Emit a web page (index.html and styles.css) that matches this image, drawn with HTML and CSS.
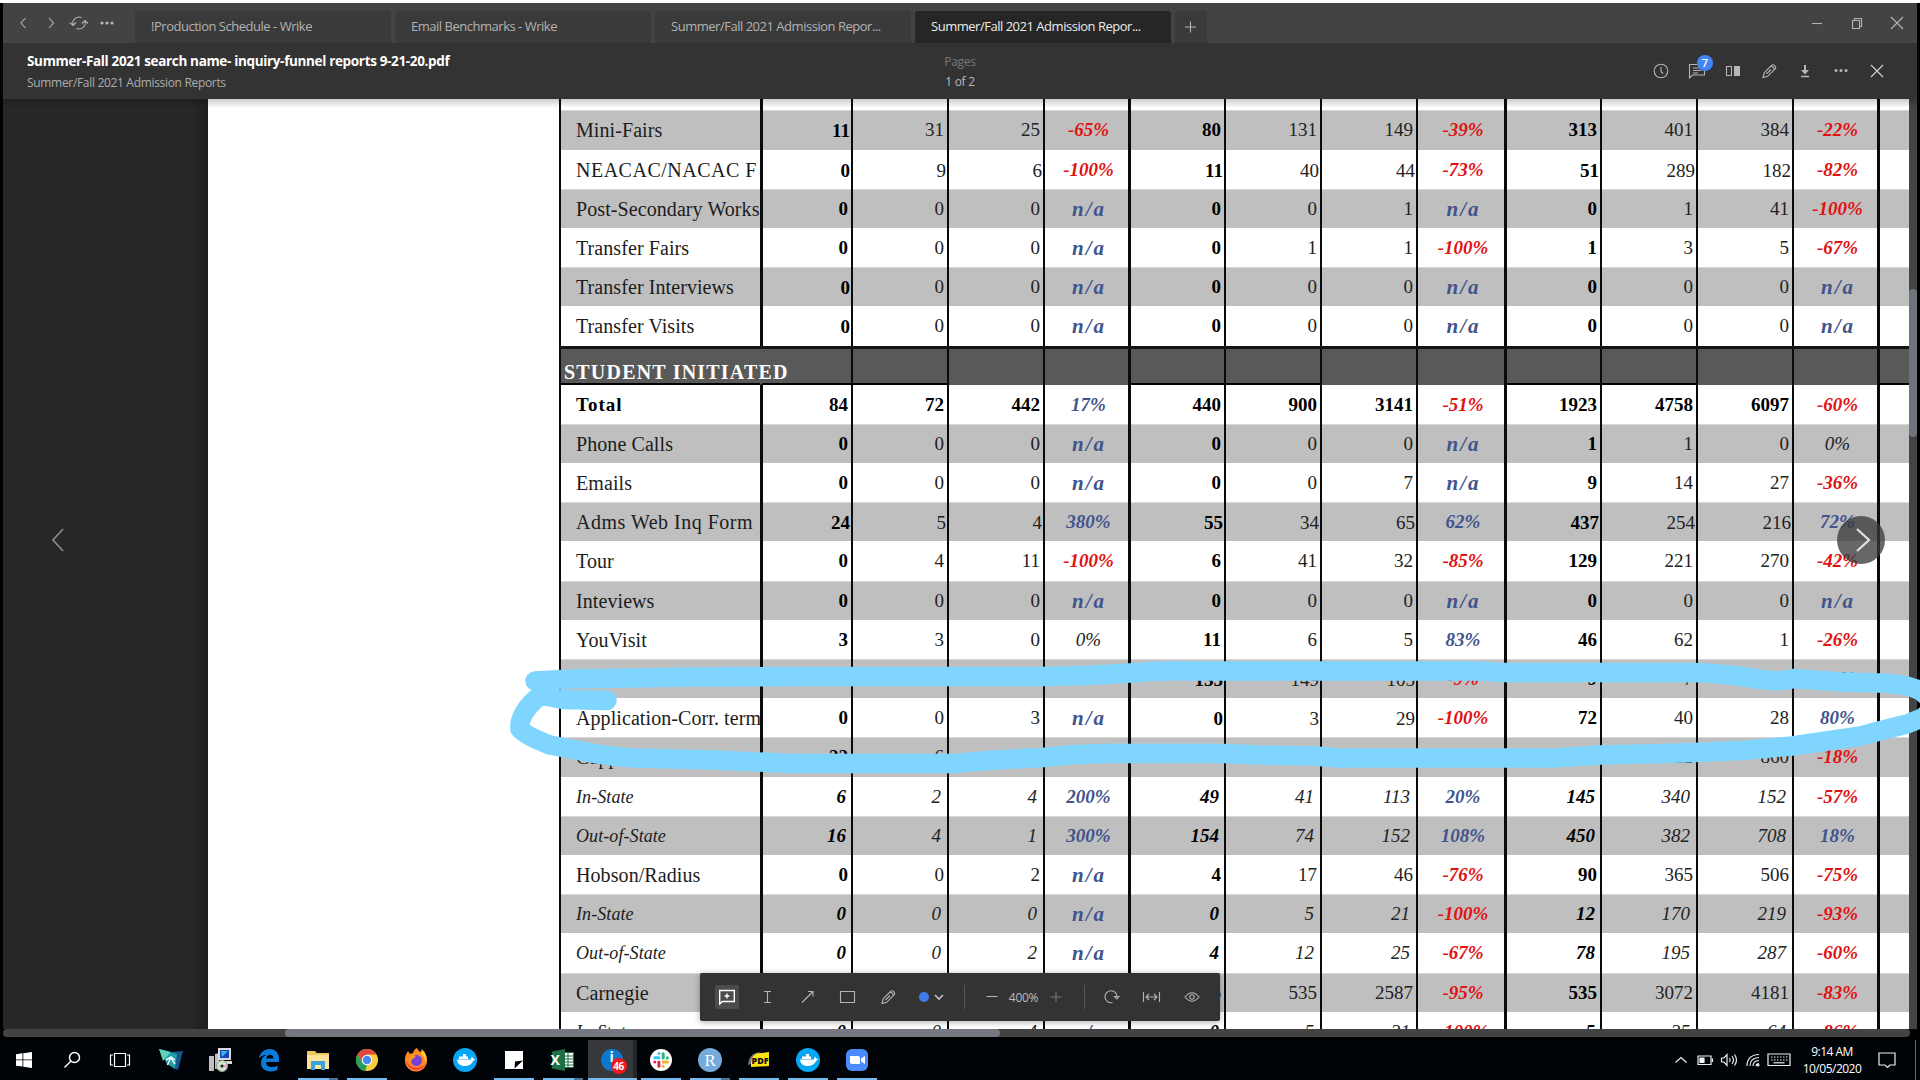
FILE: index.html
```html
<!DOCTYPE html>
<html lang="en">
<head>
<meta charset="utf-8">
<title>Summer/Fall 2021 Admission Reports</title>
<link rel="stylesheet" href="styles.css">
</head>
<body>
<div class="window">
  <div class="titlebar">
    <div class="nav">
      <svg class="ic" viewBox="0 0 24 24"><path d="M14.500 7 10 12l4.500 5"/></svg>
      <svg class="ic" viewBox="0 0 24 24"><path d="M10 7 14.500 12 10 17"/></svg>
      <svg class="ic" viewBox="0 0 24 24"><path d="M6 14A6.300 6.300 0 0 1 14.500 6.500M18 10A6.300 6.300 0 0 1 9.500 17.500M3 11.500l3 3L9 11.500M15 12.500l3-3 3 3"/></svg>
      <svg class="ic dots" viewBox="0 0 24 24"><circle cx="7" cy="12" r="1.600"/><circle cx="12" cy="12" r="1.600"/><circle cx="17" cy="12" r="1.600"/></svg>
    </div>
    <div class="tabs">
      <div class="tab">!Production Schedule - Wrike</div>
      <div class="tab">Email Benchmarks - Wrike</div>
      <div class="tab">Summer/Fall 2021 Admission Repor...</div>
      <div class="tab active">Summer/Fall 2021 Admission Repor...</div>
      <div class="tab new"><svg class="ic" viewBox="0 0 24 24"><path d="M11.500 6.500v11M6 12h11"/></svg></div>
    </div>
    <div class="controls">
      <svg class="ic" viewBox="0 0 24 24"><path d="M7 12.500h10"/></svg>
      <svg class="ic" viewBox="0 0 24 24"><path d="M7.500 9.500h7v8h-7zM9.500 9.500v-2h7v8h-2"/></svg>
      <svg class="ic" viewBox="0 0 24 24"><path d="m6 6 12 12M18 6 6 18"/></svg>
    </div>
  </div>

  <div class="header">
    <div class="doc">
      <div class="name">Summer-Fall 2021 search name- inquiry-funnel reports 9-21-20.pdf</div>
      <div class="folder">Summer/Fall 2021 Admission Reports</div>
    </div>
    <div class="pages"><div class="cap">Pages</div><div class="num">1 of 2</div></div>
    <div class="actions">
      <div><svg class="ic" viewBox="0 0 24 24"><circle cx="12" cy="12" r="6.800"/><path d="M12 8v4.500l2 2"/></svg></div>
      <div><svg class="ic" viewBox="0 0 24 24"><path d="M4.500 19V5.500h15V16H7.500zM8 9h6M8 11.500h8M8 14h5"/></svg><span class="badge">7</span></div>
      <div><svg class="ic" viewBox="0 0 24 24"><path d="M5.500 7.500h5v9h-5z"/><path class="solid" d="M13 7h6v10h-6z"/></svg></div>
      <div><svg class="ic" viewBox="0 0 24 24"><path d="m6 18.500 1.200-4.700 7.600-7.600q1.200-1 2.400 0l1.100 1.100q1 1.200 0 2.400l-7.600 7.600zM14 7.200q3 .3 3.300 3.300M14 10.500l-4.500 4.500"/></svg></div>
      <div><svg class="ic" viewBox="0 0 24 24"><path class="solid" d="M11 6h2v5h3l-4 4.500L8 11h3zM8 16.700h8v1.500H8z"/></svg></div>
      <div><svg class="ic dots" viewBox="0 0 24 24"><circle cx="7" cy="11.500" r="1.500"/><circle cx="12" cy="11.500" r="1.500"/><circle cx="17" cy="11.500" r="1.500"/></svg></div>
      <div><svg class="ic bright" viewBox="0 0 24 24"><path d="m6 6 12 12M18 6 6 18"/></svg></div>
    </div>
  </div>

  <div class="viewer">
    <div class="gutter"><svg viewBox="0 0 24 32"><path d="M17 5 7 16l10 11"/></svg></div>
    <div class="page"><div class="sheet" id="sheet"></div></div>
    <div class="vscroll"><div class="vthumb"></div></div>
    <div class="next"><svg viewBox="0 0 48 48"><path d="m20 13 12 11-12 11"/></svg></div>
    <div class="tools">
      <div class="t w1"><span class="sel"><svg class="ic white" viewBox="0 0 24 24"><path d="M4.700 19V5.500h14.600v11H7.500zM12 8.500v5M9.500 11h5"/></svg></span></div>
      <div class="t w1"><svg class="ic" viewBox="0 0 24 24"><path d="M12.500 6.500v11M9 6.500h7M9 17.500h7"/></svg></div>
      <div class="t w1"><svg class="ic" viewBox="0 0 24 24"><path d="M7 17.500 17.500 7M13 6.500h5v5"/></svg></div>
      <div class="t w1"><svg class="ic" viewBox="0 0 24 24"><path d="M5.500 6.500h14v11h-14z"/></svg></div>
      <div class="t w1"><svg class="ic" viewBox="0 0 24 24"><path d="m7 18.500 1.200-4.700 7.600-7.600q1.200-1 2.400 0l1.100 1.100q1 1.200 0 2.400l-7.600 7.600zM15 7.200q3 .3 3.300 3.300M15 10.500l-4.500 4.500"/></svg></div>
      <div class="t w2"><i class="ink"></i><svg class="chev" viewBox="0 0 12 12"><path d="m2 4 4 4 4-4"/></svg></div>
      <div class="rule"></div>
      <div class="t w3"><svg class="ic" viewBox="0 0 24 24"><path d="M6.500 11.500h11"/></svg><span class="zoom">400%</span><svg class="ic dim" viewBox="0 0 24 24"><path d="M12 6.500v11M6.500 12h11"/></svg></div>
      <div class="rule"></div>
      <div class="t w4"><svg class="ic" viewBox="0 0 24 24"><path d="M12.500 17.500A6 6 0 1 1 17 12M14.500 11.500l2.500 2.500 2-2.500z"/></svg></div>
      <div class="t w1"><svg class="ic" viewBox="0 0 24 24"><path d="M4.500 7v10M20.500 7v10M7 12h11M10 9l-3 3 3 3M15 9l3 3-3 3"/></svg></div>
      <div class="t w1"><svg class="ic" viewBox="0 0 24 24"><path d="M6 12q7-8.500 14 0-7 8.500-14 0z"/><circle cx="13" cy="12" r="2.200"/></svg></div>
    </div>
  </div>
  <div class="hscroll"><div class="hthumb"></div></div>
</div>

<div class="taskbar">
  <div class="task sys"><svg viewBox="0 0 32 32"><path fill="#fff" d="M8 10.300l6.500-1v6.200H8zM15.300 9.200 24 8v7.500h-8.700zM8 16.300h6.500v6.300L8 21.700zM15.300 16.300H24V24l-8.700-1.300z"/></svg></div>
  <div class="task sys"><svg viewBox="0 0 32 32" fill="none" stroke="#fff" stroke-width="1.500"><circle cx="18.500" cy="13.500" r="5"/><path d="m15 17-6.500 6.500"/></svg></div>
  <div class="task sys"><svg viewBox="0 0 32 32" fill="none" stroke="#fff" stroke-width="1.200"><path d="M10.500 9.500h11v13h-11zM9 11H6.500v10H9M23 11h2.500v10H23"/></svg></div>
  <div class="task first"><svg viewBox="0 0 32 32"><path fill="#17578b" d="m15 8 13-1-5 19-5-2z"/><path fill="#1f9fa5" d="m4 5 18 5-2 15-8-5z"/><path fill="#5fd0bb" d="m4 5 12 3-8 9z"/><path d="m11 16 5-3 4 3M15.500 14l-3 7M16 14l4 6" stroke="#e8fbff" stroke-width="1.500" fill="none"/></svg></div>
  <div class="task"><svg viewBox="0 0 32 32"><path fill="#bfbfbf" d="M5 12h5v15H5zM11 10l4-1v16h-4z"/><path fill="#d9d9d9" d="M14 4h13v12H14zM13 17h15v3H13z"/><path fill="#1746b8" d="M16 6h9v8h-9z"/><path fill="#3bb3e8" d="m17 7 7 0-6 6z"/><circle cx="18" cy="22" r="5.500" fill="#cfe5c8" stroke="#999"/><path fill="#e7a2d0" d="m18 22 5-2v4z"/><circle cx="18" cy="22" r="1.600" fill="#222"/></svg></div>
  <div class="task"><svg viewBox="0 0 32 32"><path fill="#0a7bd8" d="M6 14.500C7 8.500 11.500 5 16.500 5 23 5 26 9.800 26 15v3H13c.3 6 7.500 6 11.500 3.500V26C18 29 8 27.500 8 19c0-4.500 3-7 5.500-8.200-3 .2-5.700 1.500-7.500 3.700zM13.200 14.500h7.300c0-5-6.500-5-7.300 0z"/></svg></div>
  <div class="task run split"><svg viewBox="0 0 32 32"><path fill="#f0c95c" d="M5 7h8l1.500 2H27v15H5z"/><path fill="#fbe39a" d="M5 11h22v14H5z"/><path fill="#3aa2dc" d="M9 17h14v9h-4v-5h-6v5H9z"/></svg></div>
  <div class="task run"><svg viewBox="0 0 32 32"><circle cx="16" cy="16" r="11" fill="#f5cd3d"/><path fill="#dc4a3d" d="M6.500 10.500a11 11 0 0 1 19 0H16l-4.700 8z"/><path fill="#26a05a" d="M6.500 10.500 11.300 18.700 16 21l-1.700 6A11 11 0 0 1 6.500 10.500z"/><circle cx="16" cy="16" r="5.200" fill="#fff"/><circle cx="16" cy="16" r="4.200" fill="#4a87ee"/></svg></div>
  <div class="task"><svg viewBox="0 0 32 32"><path fill="#ff8b1f" d="M5 15c0-4 2-6 3-8l2 3q2-1 3-1 1-4 4-5 1 3 4 4l1-3q5 5 5 11a11 11 0 0 1-22 1z"/><path fill="#ffce3d" d="m22 6q6 6 4 12-2-6-5-8z"/><path fill="#f8433d" d="M5.500 15c2 8 12 12 20 5-4 9-18 9-20-5z"/><circle cx="16.500" cy="16.500" r="5.500" fill="#7542d8"/><path fill="#ff9a2c" d="M10 12q4-2 6 1-4 1-5 5z"/></svg></div>
  <div class="task"><svg viewBox="0 0 32 32"><circle cx="16" cy="16" r="12" fill="#06a6f4"/><path fill="#fff" d="M8 15.500h14q0-2 1-3l1.300 2 2 .5-2 1.800Q22 22 15 22q-6.500 0-7-6.500zM10 12.500h9V15h-9zM14 10h3v3h-3z"/></svg></div>
  <div class="task run"><svg viewBox="0 0 32 32"><path fill="#fff" d="M7 7h18v18H7z"/><path fill="#000" d="M16.500 24.500 17 17.500 25 16.500z"/></svg></div>
  <div class="task run split"><svg viewBox="0 0 32 32"><path fill="#fff" stroke="#1d7044" d="M16 8.500h10.500v15H16z"/><path stroke="#1d7044" d="M16 12h10M16 15h10M16 18h10M16 21h10M21 9v14"/><path fill="#1d7044" d="m5 7.500 13-2.500v22L5 24.500z"/></svg><b class="xl">X</b></div>
  <div class="task run on"><svg viewBox="0 0 32 32"><circle cx="16" cy="16" r="11" fill="#0a78cf"/></svg><b class="info">i</b><b class="count">46</b></div>
  <div class="task run"><svg viewBox="0 0 32 32" fill="none" stroke-width="3" stroke-linecap="round"><circle cx="16" cy="16" r="11" fill="#fff"/><path stroke="#36c5f0" d="M14 9.500v.1M9.800 13.800h4.200"/><path stroke="#2eb67d" d="M18.200 9.800v4.200M22.300 13.800v.1"/><path stroke="#e01e5a" d="M13.900 18v4.200M9.800 18v.1"/><path stroke="#ecb22e" d="M18.200 18h4.200M18.200 22.200v.1"/></svg></div>
  <div class="task run split"><svg viewBox="0 0 32 32"><circle cx="16" cy="16" r="12" fill="#75aadb"/></svg><b class="rr">R</b></div>
  <div class="task run"><svg viewBox="0 0 32 32"><path fill="#777" d="M5 21Q6 9 17 8L8 20z"/><path fill="#ffe610" d="M8 23Q7 9 18 9l8-1v14z"/></svg><b class="pdf">PDF</b></div>
  <div class="task run"><svg viewBox="0 0 32 32"><circle cx="16" cy="16" r="12" fill="#06a6f4"/><path fill="#fff" d="M8 15.500h14q0-2 1-3l1.300 2 2 .5-2 1.800Q22 22 15 22q-6.500 0-7-6.500zM10 12.500h9V15h-9zM14 10h3v3h-3z"/></svg></div>
  <div class="task run"><svg viewBox="0 0 32 32"><rect x="5" y="5" width="22" height="22" rx="6" fill="#4a8cff"/><path fill="#fff" d="M9 12h8q2 0 2 2v6h-8q-2 0-2-2zM20 14.500l4-2.500v8l-4-2.500z"/></svg></div>
  <div class="tray">
    <svg viewBox="0 0 24 24"><path d="m6.500 14.500 5.500-5 5.500 5"/></svg>
    <svg viewBox="0 0 24 24"><path d="M5 8h13v8.500H5zM19.500 10.500v3.500"/><path fill="#fff" d="M7 10h4v4.500H7z"/></svg>
    <svg viewBox="0 0 24 24"><path d="M4.500 10h2.500l3-3.500v11L7 14H4.500zM12.500 10q1.500 2 0 4M15 8q3 4 0 8M17.500 6.500q4 5.500 0 11"/></svg>
    <svg viewBox="0 0 24 24"><path d="M6 18Q6 7 18 6.500M9 18q0-8 9-8.500M12 18q0-5 6-5.500M15 18q0-2 3-2.500"/><circle cx="17" cy="17" r="1"/></svg>
    <svg class="kb" viewBox="0 0 28 24"><path d="M3 6h22v11.500H3z"/><path stroke-dasharray="1.500 1.500" d="M6 9h17M6 12h17"/><path d="M8.500 14.800h11"/></svg>
    <div class="clock"><div>9:14 AM</div><div class="date">10/05/2020</div></div>
    <svg viewBox="0 0 24 24"><path d="M4 5h16v12h-5l-2.500 2.500L10 17H4z"/></svg>
    <i class="peek"></i>
  </div>
</div>

<svg class="marker" viewBox="0 0 1920 1080"><path d="M535 681 572 679Q640 678 690 677L862 676.500H1043Q1090 676 1130 673T1190 671H1475L1505 672.500H1690Q1720 673 1751 678T1792 678.500L1843 682 1879 683Q1910 684 1922 692 1940 706 1922 718L1907 724 1879 731 1861 736 1792 746 1742 750.500 1682 753 1600 755 1553 758H1338L1315 756 1260 755 1223 753.500H1111Q1070 754 1043 757.500L994 760 953 763.500H794L713 760 636 758Q610 757 581 751L550 745Q526 736 520 729 519 722 524 713 530 703 541 695L563 699.500 607 700.500"/></svg>
<script src="report.js"></script>
</body>
</html>
```
FILE: styles.css
```css
* { box-sizing: border-box; }
body { margin: 0; width: 1920px; height: 1080px; overflow: hidden; background: #000; font-family: "Open Sans", "Noto Sans", sans-serif; border-top: 3px solid #fff; display: flex; flex-direction: column; }
svg { display: block; }
.window { margin: 0 3px 3px; height: 1037px; display: flex; flex-direction: column; flex: none; }
.ic { width: 24px; height: 24px; fill: none; stroke: #b4b4b4; stroke-width: 1.1; flex: none; }
.ic .solid, .ic.dots { fill: #b8b8b8; stroke: none; }
.ic.bright { stroke: #d4d4d4; }
.ic.white { stroke: #fff; stroke-width: 1.4; }
.ic.dim { stroke: #777; }

.titlebar { height: 40px; background: #434343; display: flex; }
.nav { width: 132px; padding-left: 8px; display: flex; gap: 4px; align-items: center; }
.tabs { display: flex; gap: 4px; padding-top: 8px; flex: 1; }
.tab { width: 256px; height: 32px; border-radius: 3px 3px 0 0; background: #3a3a3a; color: #b3b3b3; font-size: 13px; line-height: 31px; padding-left: 16px; letter-spacing: -0.48px; white-space: nowrap; }
.tab.active { background: #262626; color: #ececec; }
.tab.new { width: 32px; padding: 4px; }
.controls { display: flex; align-items: center; gap: 16px; padding-right: 8px; }

.header { height: 56px; background: #333; display: grid; grid-template-columns: 1fr 200px 1fr; color: #fff; }
.doc { padding-left: 24px; }
.name { font-size: 13.5px; font-weight: 700; line-height: 20px; padding-top: 8px; letter-spacing: -0.34px; white-space: nowrap; }
.folder { font-size: 12px; line-height: 18px; color: #adadad; margin-top: 3px; letter-spacing: -0.32px; }
.pages { text-align: center; font-size: 12px; letter-spacing: -0.3px; line-height: 20px; padding: 9px 0 0 0; }
.pages .cap { color: #777; }
.pages .num { color: #b9b9b9; }
.actions { display: flex; justify-content: flex-end; padding-right: 22px; align-items: center; }
.actions > div { width: 36px; display: flex; justify-content: center; position: relative; }
.badge { position: absolute; left: 18px; top: -4px; width: 16px; height: 16px; border-radius: 8px; background: #4285f4; color: #fff; font-size: 11px; line-height: 16px; font-weight: 600; text-align: center; }

.viewer { height: 930px; display: flex; position: relative; background: #262626; overflow: hidden; }
.viewer::before { content: ""; position: absolute; inset: 0 0 auto 0; height: 9px; background: linear-gradient(rgba(0,0,0,.2), transparent); z-index: 2; }
.gutter { width: 205px; padding: 425px 0 0 43px; background: linear-gradient(90deg, #272727 92%, #1e1e1e); }
.gutter svg { width: 24px; height: 32px; fill: none; stroke: #8a8a8a; stroke-width: 1.8; }
.page { width: 1701px; background: #fff; overflow: hidden; }
.vscroll { flex: 1; background: #434446; padding-top: 190px; }
.vthumb { height: 148px; background: #6f747c; border-radius: 4px; }
.next { position: absolute; left: 1834px; top: 417px; width: 48px; height: 48px; border-radius: 50%; background: rgba(55,55,55,.76); }
.next svg { fill: none; stroke: #e2e2e2; stroke-width: 2.2; }

.sheet { margin-left: 351px; font-family: "Liberation Serif", "Times New Roman", serif; font-size: 19px; color: #111; }
.row { display: grid; grid-template-columns: 201px 91px 96px 96px 85px 96px 96px 96px 88px 96px 96px 96px 85px 32px; grid-template-rows: 100%; height: 39.2px; }
.row.lead { height: 11.4px; }
.row.gray { background: #bfbfbf; box-shadow: inset 0 1px #d8d8d8; }
.row > div { border-left: 2px solid #0a0a0a; line-height: 40px; white-space: nowrap; overflow: hidden; text-align: right; padding-right: 3px; color: #222; }
.row > .g { border-left-width: 3px; }
.row > .label { text-align: left; font-size: 20px; padding: 0 0 0 15px; letter-spacing: 0.08px; color: #1c1c1c; }
.row > .caps { letter-spacing: 0.5px; }
.row > .n1, .row.total > .num, .row.total > .label { font-weight: 700; color: #000; }
.row.total > .label { font-size: 19px; letter-spacing: 1px; }
.row.sub > .label { font-size: 18px; }
.row.sub > .label, .row.sub > .num { font-style: italic; }
.row.sub > .num { padding-right: 6px; }
.row.sub > .n1 { padding-right: 5px; }
.row > .low { line-height: 42px; padding-right: 1px; }
.row > .pct { text-align: center; font-weight: 700; font-style: italic; padding: 0 0 0 4px; }
.row > .neg { color: #e01212; }
.row > .pos { color: #41548c; }
.row > .na { font-size: 21px; letter-spacing: 2px; padding-left: 5px; }
.row > .zero { font-weight: 400; }
.row.section { background: #595959; border-top: 3px solid #151515; }
.row.section > div { border-bottom: 2px solid #000; line-height: 34px; }
.row.section > .label { color: #fff; font-weight: 700; font-size: 20px; letter-spacing: 1.2px; line-height: 46px; padding: 0 0 0 3px; overflow: visible; }
.row.section > .n1.first { border-left-color: transparent; }
.row.section > .open { border-bottom: 0; }

.tools { position: absolute; left: 697px; top: 874px; width: 520px; height: 48px; background: #333; border-radius: 2px; box-shadow: 0 1px 6px rgba(0,0,0,.35); display: flex; align-items: center; padding-left: 7px; }
.t { display: flex; align-items: center; justify-content: center; flex: none; }
.w1 { width: 40px; }
.w2 { width: 57px; gap: 4px; padding-right: 7px; }
.w3 { width: 119px; padding-right: 2px; }
.w4 { width: 46px; padding-left: 8px; }
.sel { background: #4c4c4c; border-radius: 2px; }
.ink { width: 10px; height: 10px; border-radius: 5px; background: #3f7ce8; }
.chev { width: 12px; height: 12px; fill: none; stroke: #c4c4c4; stroke-width: 1.6; }
.rule { width: 1px; height: 24px; background: #555; }
.zoom { width: 40px; text-align: center; font-size: 12px; color: #bbb; letter-spacing: -0.3px; }

.hscroll { height: 8px; width: 1907px; background: #434343; border-radius: 4px; padding-left: 282px; }
.hthumb { width: 715px; height: 8px; border-radius: 4px; background: #767981; }

.taskbar { height: 40px; margin-top: -3px; background: #000308; display: flex; flex: none; z-index: 1; }
.task { width: 49px; height: 40px; display: flex; align-items: center; justify-content: center; position: relative; flex: none; }
.task.sys { width: 48px; }
.task.first { margin-left: 2.5px; }
.task svg { width: 32px; height: 32px; }
.task.run::after { content: ""; position: absolute; left: 4.5px; bottom: 0; width: 40px; height: 2px; background: #76b9ed; }
.task.split::after { background: linear-gradient(90deg, #76b9ed 31px, #4a7599 31px); }
.task.on { background: linear-gradient(90deg, #37383b 45px, #242528 45px); }
.task.on::after { left: 0; width: 49px; }
.task b { position: absolute; color: #fff; line-height: 1; }
.task .xl { left: 12px; top: 13px; font-size: 14px; }
.task .info { left: 22px; top: 10px; font-size: 14px; }
.task .count { left: 23px; top: 18px; width: 16px; height: 16px; border-radius: 8px; background: #f01818; font-size: 10px; line-height: 16px; text-align: center; letter-spacing: -0.4px; }
.task .rr { font: 400 17px/1 "Liberation Serif", serif; left: 19px; top: 12px; }
.task .pdf { color: #111; font-size: 9px; font-weight: 800; left: 17px; top: 16px; }
.tray { margin-left: auto; display: flex; align-items: center; }
.tray svg { width: 24px; height: 24px; fill: none; stroke: #eee; stroke-width: 1.2; }
.tray .kb { width: 28px; }
.clock { width: 78px; margin-right: 4px; text-align: center; color: #fff; font-size: 12px; line-height: 17.5px; letter-spacing: -0.5px; }
.peek { width: 1px; height: 40px; background: #666; margin: 0 4px 0 16px; }

.marker { position: absolute; inset: 0; width: 1920px; height: 1080px; fill: none; stroke: #80d5ff; stroke-width: 19.5; stroke-linecap: round; stroke-linejoin: round; pointer-events: none; z-index: 3; }
```
FILE: report.js
```js
// Each line: label | four columns for each of the three periods.
// "_" after a number sets it slightly lower; "*" marks a sub-row, "!" a total.
const rows = `
Mini-Fairs|11_|31|25|-65%|80|131|149|-39%|313|401|384|-22%
NEACAC/NACAC F|0_|9_|6_|-100%|11_|40_|44_|-73%|51_|289_|182_|-82%
Post-Secondary Works|0|0|0|n/a|0|0|1|n/a|0|1|41|-100%
Transfer Fairs|0|0|0|n/a|0|1|1|-100%|1|3|5|-67%
Transfer Interviews|0_|0|0|n/a|0|0|0|n/a|0|0|0|n/a
Transfer Visits|0_|0|0|n/a|0|0|0|n/a|0|0|0|n/a
#STUDENT INITIATED
!Total|84|72|442|17%|440|900|3141|-51%|1923|4758|6097|-60%
Phone Calls|0|0|0|n/a|0|0|0|n/a|1|1|0|0%
Emails|0|0|0|n/a|0|0|7|n/a|9|14|27|-36%
Adms Web Inq Form|24_|5_|4_|380%|55_|34_|65_|62%|437_|254_|216_|72%
Tour|0|4|11|-100%|6|41|32|-85%|129|221|270|-42%
Inteviews|0|0|0|n/a|0|0|0|n/a|0|0|0|n/a
YouVisit|3|3|0|0%|11|6|5|83%|46|62|1|-26%
|||||135_|149_|105_|-9%|9|7||29%
Application-Corr. term|0|0|3|n/a|0_|3_|29_|-100%|72|40|28|80%
Cappex|22|6|5|267%|203|115|265|77%|595|722|860|-18%
*In-State|6|2|4|200%|49|41|113|20%|145|340|152|-57%
*Out-of-State|16|4|1|300%|154|74|152|108%|450|382|708|18%
Hobson/Radius|0|0|2|n/a|4|17|46|-76%|90|365|506|-75%
*In-State|0|0|0|n/a|0|5|21|-100%|12|170|219|-93%
*Out-of-State|0|0|2|n/a|4|12|25|-67%|78|195|287|-60%
Carnegie|||||26|535|2587|-95%|535|3072|4181|-83%
*In-State|0|0|4|n/a|0|5|31|-100%|5|35|64|-86%
`.trim().split("\n");

const sheet = document.getElementById("sheet");

function addRow(text, kind) {
  const row = document.createElement("div");
  row.className = "row " + kind;
  const values = text.split("|");
  for (let i = 0; i < 14; i++) {
    const cell = document.createElement("div");
    let v = values[i] || "";
    const col = (i - 1) % 4;
    if (i === 0) cell.className = /^(NEACAC|Adms)/.test(v) ? "label caps" : "label";
    else if (i === 13) cell.className = "g";
    else if (col === 3) {
      cell.className = "pct " + (v === "n/a" ? "pos na" : v === "0%" ? "zero" : v[0] === "-" ? "neg" : "pos");
      if (kind === "section") cell.classList.add("open");
    } else {
      cell.className = "num";
      if (col === 0) cell.classList.add("n1", "g");
      if (i === 1) cell.classList.add("first");
      if (col === 2 && kind === "section") cell.classList.add("open");
      if (v.endsWith("_")) { cell.classList.add("low"); v = v.slice(0, -1); }
    }
    cell.textContent = v;
    row.append(cell);
  }
  sheet.append(row);
}

addRow("", "lead");
rows.forEach((line, i) => {
  const mark = "#!*".includes(line[0]) ? line[0] : "";
  const shade = i % 2 === 0 ? "gray" : "";
  const kind = { "#": "section", "!": "total", "*": "sub " + shade }[mark] || shade;
  addRow(mark ? line.slice(1) : line, kind);
});
```
